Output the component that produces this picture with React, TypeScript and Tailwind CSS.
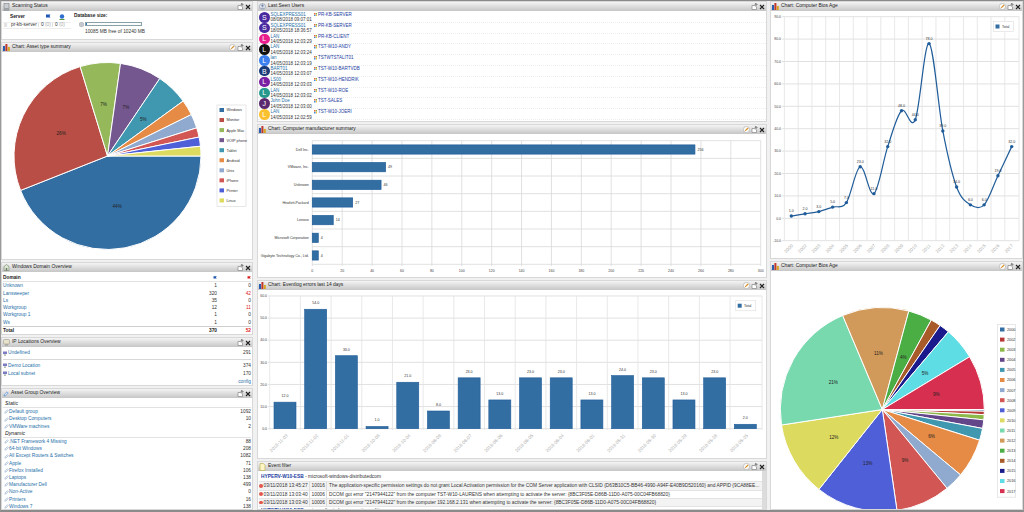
import React from 'react';

const font = { fontFamily: '"Liberation Sans", Arial, sans-serif' };

function BarsIcon() {
  return (
    <svg width="7" height="7" viewBox="0 0 7 7" className="shrink-0">
      <rect x="0" y="2" width="2" height="5" fill="#2a5db0" />
      <rect x="2.4" y="0" width="2" height="7" fill="#c0392b" />
      <rect x="4.8" y="3" width="2" height="4" fill="#d9a520" />
    </svg>
  );
}

function ComputerIcon() {
  return (
    <svg width="7" height="8" viewBox="0 0 7 8" className="shrink-0">
      <rect x="1" y="0.5" width="5" height="5" fill="#c9ccd0" stroke="#7b7f85" strokeWidth="0.6" />
      <rect x="0.5" y="6.3" width="6" height="1.4" fill="#8c9096" />
    </svg>
  );
}

function DomainIcon() {
  return (
    <svg width="7" height="7" viewBox="0 0 7 7" className="shrink-0">
      <path d="M1 6.5V2.5L3.5 0.5 6 2.5v4z" fill="#dfe6d8" stroke="#6d7f62" strokeWidth="0.6" />
      <rect x="2.7" y="4" width="1.6" height="2.5" fill="#6d7f62" />
    </svg>
  );
}

function PinIcon() {
  return (
    <svg width="7" height="7" viewBox="0 0 7 7" className="shrink-0">
      <rect x="0.5" y="0.5" width="6" height="4.5" rx="1" fill="#e7e2c9" stroke="#8b8b80" strokeWidth="0.5" />
      <rect x="2" y="5.5" width="3" height="1" fill="#9a9a90" />
    </svg>
  );
}

function TagIcon({ color = '#8aa7c9', size = 6 }: { color?: string; size?: number }) {
  return (
    <svg width={size} height={size} viewBox="0 0 6 6" className="shrink-0">
      <path d="M1 5 L1.4 3.4 4 0.8 5.2 2 2.6 4.6z" fill="#e9eef3" stroke={color} strokeWidth="0.6" />
    </svg>
  );
}

function UserCircleIcon() {
  return (
    <svg width="7" height="7" viewBox="0 0 7 7" className="shrink-0">
      <circle cx="3.5" cy="3.5" r="3" fill="#dfe5ee" stroke="#8a94a6" strokeWidth="0.6" />
      <circle cx="3.5" cy="2.7" r="1.1" fill="#6c7f9e" />
      <path d="M1.6 5.6c.5-1.2 3.3-1.2 3.8 0" fill="#6c7f9e" />
    </svg>
  );
}

function NoteIcon() {
  return (
    <svg width="7" height="8" viewBox="0 0 7 8" className="shrink-0">
      <path d="M1 0.5h3.4L6 2.2v5.3H1z" fill="#fdf6c4" stroke="#b9a94a" strokeWidth="0.6" />
    </svg>
  );
}

function FlagIcon({ color }: { color: string }) {
  return (
    <svg width="4" height="4" viewBox="0 0 4 4" className="shrink-0">
      <path d="M0.5 4V0.3h3.2L3 1.4l.7 1.1H0.5" fill={color} />
    </svg>
  );
}

function HeaderActions({ edit }: { edit?: boolean }) {
  return (
    <div className="ml-auto flex items-center gap-[1px]">
      {edit && (
        <svg width="7" height="7" viewBox="0 0 7 7">
          <circle cx="3.5" cy="3.5" r="3.1" fill="#fff" stroke="#9a9a9a" strokeWidth="0.5" />
          <path d="M1.8 5.2l.4-1.3L4.6 1.5l1 1-2.5 2.3z" fill="#d9952e" />
        </svg>
      )}
      <svg width="7" height="7" viewBox="0 0 7 7">
        <path d="M1 2.5h2.6M1 2.5v4h4.5V4" fill="#fff" stroke="#777" strokeWidth="0.6" />
        <path d="M5 0.5v3M3.6 1.9 5 0.5l1.4 1.4" fill="none" stroke="#444" strokeWidth="0.7" />
      </svg>
      <svg width="6" height="6" viewBox="0 0 6 6">
        <path d="M1 1l4 4M5 1L1 5" stroke="#222" strokeWidth="1.1" />
      </svg>
    </div>
  );
}

function Panel({
  title,
  icon,
  edit,
  className,
  children,
}: {
  title: string;
  icon: React.ReactNode;
  edit?: boolean;
  className: string;
  children: React.ReactNode;
}) {
  return (
    <section className={`flex flex-col overflow-hidden border border-[#d8d8d8] bg-white ${className}`}>
      <header className="flex h-[9px] shrink-0 items-center gap-[1px] bg-gradient-to-b from-[#f4f4f4] to-[#c6c6c6] pl-[1px] pr-[1px] text-[4.9px] leading-none text-[#222]">
        {icon}
        <span className="ml-[1px]">{title}</span>
        <HeaderActions edit={edit} />
      </header>
      <div className="relative min-h-0 flex-1 overflow-hidden">{children}</div>
    </section>
  );
}

function polar(cx: number, cy: number, r: number, deg: number) {
  const a = (deg * Math.PI) / 180;
  return [cx + r * Math.cos(a), cy + r * Math.sin(a)];
}

function Pie({
  cx,
  cy,
  r,
  slices,
  labelAt = 0.55,
}: {
  cx: number;
  cy: number;
  r: number;
  slices: { deg: number; color: string; label?: string }[];
  labelAt?: number;
}) {
  let start = 0;
  return (
    <g>
      {slices.map((s, i) => {
        const end = start + s.deg;
        const [x1, y1] = polar(cx, cy, r, start);
        const [x2, y2] = polar(cx, cy, r, end);
        const [lx, ly] = polar(cx, cy, r * labelAt, start + s.deg / 2);
        start = end;
        return (
          <g key={i}>
            <path
              d={`M${cx} ${cy}L${x1} ${y1}A${r} ${r} 0 ${s.deg > 180 ? 1 : 0} 1 ${x2} ${y2}Z`}
              fill={s.color}
              stroke="#fff"
              strokeWidth="1"
              strokeLinejoin="round"
            />
            {s.label && (
              <text x={lx} y={ly + 1.5} textAnchor="middle" fontSize="4.6" fill="#222">
                {s.label}
              </text>
            )}
          </g>
        );
      })}
    </g>
  );
}

function PieLegend({
  x,
  y,
  w,
  step,
  items,
}: {
  x: number;
  y: number;
  w: number;
  step: number;
  items: { name: string; color: string }[];
}) {
  return (
    <g>
      <rect x={x} y={y} width={w} height={step * items.length + 1} fill="#fff" stroke="#e2e2e2" strokeWidth="0.8" />
      {items.map((it, i) => (
        <g key={it.name}>
          <rect x={x + 2.5} y={y + 3 + i * step} width="4.5" height="4" fill={it.color} />
          <text x={x + 9.5} y={y + 6.4 + i * step} fontSize="3.8" fill="#333">
            {it.name}
          </text>
        </g>
      ))}
    </g>
  );
}

const assetSlices = [
  { name: 'Windows', deg: 158.4, color: '#336ea3', label: '44%' },
  { name: 'Monitor', deg: 94.6, color: '#b84e45', label: '26%' },
  { name: 'Apple Mac', deg: 25, color: '#95b85a', label: '7%' },
  { name: 'VOIP phone', deg: 26, color: '#75578f', label: '7%' },
  { name: 'Tablet', deg: 20, color: '#3f97b0', label: '5%' },
  { name: 'Android', deg: 9.7, color: '#e58b45' },
  { name: 'Unix', deg: 8.8, color: '#8fa9cf' },
  { name: 'iPhone', deg: 5.8, color: '#d25653' },
  { name: 'Printer', deg: 5.7, color: '#4e5fd8' },
  { name: 'Linux', deg: 6, color: '#ddda60' },
];

function AssetPie() {
  return (
    <svg viewBox="2 52 250 207" className="h-full w-full" style={font}>
      <Pie cx={107.5} cy={156} r={93.5} slices={assetSlices} />
      <PieLegend x={217} y={105} w={29} step={10.05} items={assetSlices} />
    </svg>
  );
}

const biosYears = ['2000', '2002', '2003', '2004', '2005', '2006', '2007', '2008', '2009', '2010', '2011', '2012', '2013', '2014', '2015', '2016', '2017'];
const biosValues = [1, 2, 3, 5, 7, 23, 11, 32, 48, 44, 78, 39, 14, 6, 6, 19, 32];
const biosColors = ['#336ea3', '#b83a38', '#8db84a', '#63458a', '#3f97b0', '#e58b45', '#8fa9cf', '#d25653', '#4e5fd8', '#ddda60', '#78d8ae', '#d29a5a', '#4bae45', '#a85a28', '#1a1a8c', '#5fdde5', '#d62f4f'];

function BiosPie() {
  const slices = biosValues.map((v, i) => {
    const pct = Math.round((v / 370) * 100);
    return { deg: (v / 370) * 360, color: biosColors[i], label: pct >= 4 ? `${pct}%` : undefined };
  });
  return (
    <svg viewBox="771 271 251 238" className="h-full w-full" style={font}>
      <Pie cx={882.3} cy={409.5} r={102} slices={slices} />
      <PieLegend
        x={997.5}
        y={324.5}
        w={18}
        step={10.1}
        items={biosYears.map((name, i) => ({ name, color: biosColors[i] }))}
      />
    </svg>
  );
}

function BiosLine() {
  const x = (i: number) => 791.3 + i * 13.775;
  const y = (v: number) => 218.3 - v * 2.24;
  const pts = biosValues.map((v, i) => [x(i), y(v)]);
  let d = `M${pts[0][0]} ${pts[0][1]}`;
  for (let i = 0; i < pts.length - 1; i++) {
    const p0 = pts[Math.max(i - 1, 0)];
    const p1 = pts[i];
    const p2 = pts[i + 1];
    const p3 = pts[Math.min(i + 2, pts.length - 1)];
    d += `C${p1[0] + (p2[0] - p0[0]) / 6} ${p1[1] + (p2[1] - p0[1]) / 6} ${p2[0] - (p3[0] - p1[0]) / 6} ${p2[1] - (p3[1] - p1[1]) / 6} ${p2[0]} ${p2[1]}`;
  }
  const ticks = [90, 80, 70, 60, 50, 40, 30, 20, 10, 0, -10];
  return (
    <svg viewBox="771 11 251 247" className="h-full w-full" style={font}>
      {ticks.map((t) => (
        <g key={t}>
          <line x1={782} x2={1019} y1={y(t)} y2={y(t)} stroke="#d9d9d9" strokeWidth="0.8" />
          <text x={781} y={y(t) + 1.2} textAnchor="end" fontSize="3.5" fill="#444">
            {t.toFixed(1)}
          </text>
        </g>
      ))}
      {biosYears.map((_, i) => (
        <line key={i} x1={784.4 + i * 13.775} x2={784.4 + i * 13.775} y1={16.7} y2={240.7} stroke="#e2e2e2" strokeWidth="0.8" />
      ))}
      <line x1={1019} x2={1019} y1={16.7} y2={240.7} stroke="#e2e2e2" strokeWidth="0.8" />
      <path d={d} fill="none" stroke="#1f5c99" strokeWidth="1.2" />
      {pts.map((p, i) => (
        <g key={i}>
          <circle cx={p[0]} cy={p[1]} r="1.7" fill="#1f5c99" />
          <text x={p[0]} y={p[1] - 4} textAnchor="middle" fontSize="3.6" fill="#333">
            {biosValues[i].toFixed(1)}
          </text>
          <text
            x={p[0] + 2}
            y={246}
            textAnchor="end"
            fontSize="4.6"
            fill="#b0b0b0"
            transform={`rotate(-45 ${p[0] + 2} 246)`}
          >
            {biosYears[i]}
          </text>
        </g>
      ))}
      <rect x={993.5} y={21.5} width={20} height={10} fill="#fff" stroke="#e2e2e2" strokeWidth="0.7" />
      <rect x={995.5} y={24.5} width={4} height={4} fill="#336ea3" />
      <text x={1002} y={27.8} fontSize="3.5" fill="#333">
        Total
      </text>
    </svg>
  );
}

const makers: [string, number][] = [
  ['Dell Inc.', 256],
  ['VMware, Inc.', 49],
  ['Unknown', 46],
  ['Hewlett-Packard', 27],
  ['Lenovo', 14],
  ['Microsoft Corporation', 4],
  ['Gigabyte Technology Co., Ltd.', 4],
];

function MakerBars() {
  const left = 312.3;
  const top = 140.7;
  const rowH = 17.66;
  const unit = 448.4 / 300;
  const ticks = Array.from({ length: 16 }, (_, i) => i * 20);
  return (
    <svg viewBox="258 134 508 143" className="h-full w-full" style={font}>
      {ticks.map((t) => (
        <g key={t}>
          <line x1={left + t * unit} x2={left + t * unit} y1={top} y2={266} stroke="#d9d9d9" strokeWidth="0.8" />
          <text x={left + t * unit} y={272} textAnchor="middle" fontSize="3.5" fill="#444">
            {t}
          </text>
        </g>
      ))}
      {Array.from({ length: 8 }, (_, i) => (
        <line key={i} x1={left} x2={760.7} y1={top + i * rowH} y2={top + i * rowH} stroke="#d9d9d9" strokeWidth="0.8" />
      ))}
      {makers.map(([name, v], i) => (
        <g key={name}>
          <text x={left - 3.5} y={top + i * rowH + 10} textAnchor="end" fontSize="3.6" fill="#333">
            {name}
          </text>
          <rect x={left} y={top + i * rowH + 4.2} width={v * unit} height={9.2} fill="#336ea3" stroke="#1f5c99" strokeWidth="0.7" />
          <text x={left + v * unit + 2.5} y={top + i * rowH + 10} fontSize="3.6" fill="#333">
            {v}
          </text>
        </g>
      ))}
    </svg>
  );
}

const errors: [string, number][] = [
  ['2018-11-03', 12],
  ['2018-11-02', 54],
  ['2018-11-01', 33],
  ['2018-10-08', 1],
  ['2018-10-04', 21],
  ['2018-06-08', 8],
  ['2018-06-07', 23],
  ['2018-06-06', 13],
  ['2018-06-05', 23],
  ['2018-06-04', 23],
  ['2018-06-01', 13],
  ['2018-05-31', 24],
  ['2018-05-30', 23],
  ['2018-05-29', 13],
  ['2018-05-28', 23],
  ['2018-05-25', 2],
];

function ErrorBars() {
  const y = (v: number) => 428.7 - v * 2.212;
  const x = (i: number) => 285 + i * 30.69;
  return (
    <svg viewBox="258 290 508 168" className="h-full w-full" style={font}>
      {[60, 50, 40, 30, 20, 10, 0].map((t) => (
        <g key={t}>
          <line x1={268} x2={762} y1={y(t)} y2={y(t)} stroke="#d9d9d9" strokeWidth="0.8" />
          <text x={267} y={y(t) + 1.2} textAnchor="end" fontSize="3.5" fill="#444">
            {t.toFixed(1)}
          </text>
        </g>
      ))}
      {errors.map((_, i) => (
        <line key={i} x1={x(i) - 15.3} x2={x(i) - 15.3} y1={296} y2={430} stroke="#e2e2e2" strokeWidth="0.8" />
      ))}
      <line x1={762} x2={762} y1={296} y2={430} stroke="#e2e2e2" strokeWidth="0.8" />
      {errors.map(([date, v], i) => (
        <g key={date}>
          <rect x={x(i) - 11} y={y(v)} width={22} height={v * 2.212} fill="#336ea3" stroke="#1f5c99" strokeWidth="0.6" />
          <text x={x(i)} y={y(v) - 5} textAnchor="middle" fontSize="3.6" fill="#333">
            {v.toFixed(1)}
          </text>
          <text
            x={x(i) + 3}
            y={436}
            textAnchor="end"
            fontSize="4.6"
            fill="#b0b0b0"
            transform={`rotate(-45 ${x(i) + 3} 436)`}
          >
            {date}
          </text>
        </g>
      ))}
      <rect x={735.7} y={300.7} width={20} height={10} fill="#fff" stroke="#e2e2e2" strokeWidth="0.7" />
      <rect x={737.7} y={303.7} width={4} height={4} fill="#336ea3" />
      <text x={744} y={307} fontSize="3.5" fill="#333">
        Total
      </text>
    </svg>
  );
}

function ScanningBody() {
  return (
    <div className="flex pl-[1px] pt-[3px] text-[4.8px] leading-none text-[#222]">
      <div className="w-[68px]">
        <div className="flex h-[6px] items-end">
          <b className="ml-[7px] w-[35px]">Server</b>
          <svg width="6" height="6" viewBox="0 0 6 6">
            <path d="M1 6V0.5h4.5L4.5 2l1 1.5H1" fill="#1d55b5" />
          </svg>
          <svg width="6" height="6" viewBox="0 0 6 6" className="ml-[7.5px]">
            <circle cx="3" cy="2.5" r="2.2" fill="#2f6fd0" />
            <rect x="0.5" y="5" width="5" height="1" fill="#5a9a3c" />
          </svg>
        </div>
        <div className="mt-[1.5px] flex h-[7px] items-center border-y border-[#eeeeee] text-[#333]">
          <span className="w-[6px] pl-[1px] text-[4px] text-[#aaa]">|||</span>
          <span className="w-[29px] pl-[2px]">pr-kb-server</span>
          <span className="w-[14px] border-l border-[#ddd] pl-[2px]">
            0 <span className="text-[#aaa]">(0)</span>
          </span>
          <span className="border-l border-[#ddd] pl-[2px]">
            0 <span className="text-[#aaa]">(0)</span>
          </span>
        </div>
      </div>
      <div className="ml-[3px]">
        <b className="block h-[6px]">Database size:</b>
        <div className="mt-[1.5px] flex items-center gap-[1px]">
          <svg width="5" height="5" viewBox="0 0 5 5" className="ml-[5px]">
            <rect x="0.5" y="0.5" width="4" height="4" rx="1" fill="#c4c9cf" stroke="#858a90" strokeWidth="0.4" />
          </svg>
          <div className="h-[4px] w-[57px] border border-[#8aa0a8] bg-[#fbfdfd]">
            <div className="h-full w-[1px] bg-[#2f78b8]" />
          </div>
        </div>
        <div className="ml-[11px] mt-[3px] text-[#333]">10085 MB free of 10240 MB</div>
      </div>
    </div>
  );
}

const domains: [string, string, string][] = [
  ['Unknown', '1', '0'],
  ['Lansweeper', '320', '42'],
  ['Ls', '35', '0'],
  ['Workgroup', '12', '11'],
  ['Workgroup 1', '1', '0'],
  ['Ws', '1', '0'],
];

function DomainBody() {
  return (
    <div className="px-[1px] pt-[2px] text-[4.8px] leading-[7.3px]">
      <div className="flex items-center border-b border-[#e2e2e2] font-bold text-[#222]">
        <span>Domain</span>
        <span className="ml-auto">
          <FlagIcon color="#1d55b5" />
        </span>
        <span className="flex w-[34px] justify-end">
          <FlagIcon color="#d92020" />
        </span>
      </div>
      {domains.map(([name, count, bad]) => (
        <div key={name} className="flex text-[#333]">
          <a className="text-[#1f6fa8]">{name}</a>
          <span className="ml-auto">{count}</span>
          <span className={`w-[34px] text-right ${bad === '0' ? '' : 'text-[#e02020]'}`}>{bad}</span>
        </div>
      ))}
      <div className="flex border-t border-[#cfcfcf] font-bold text-[#222]">
        <span>Total</span>
        <span className="ml-auto">370</span>
        <span className="w-[34px] text-right text-[#e02020]">52</span>
      </div>
    </div>
  );
}

function IpRow({ name, count }: { name: string; count: string }) {
  return (
    <div className="flex items-center gap-[1px] leading-[8px]">
      <svg width="4" height="5" viewBox="0 0 4 5" className="shrink-0">
        <rect x="0" y="0.5" width="4" height="2.6" fill="#7c7cc4" />
        <rect x="1" y="3.6" width="2" height="1" fill="#8d9a86" />
      </svg>
      <a className="text-[#1f6fa8]">{name}</a>
      <span className="ml-auto text-[#333]">{count}</span>
    </div>
  );
}

function IpBody() {
  return (
    <div className="px-[1px] pt-[2px] text-[4.8px]">
      <IpRow name="Undefined" count="291" />
      <div className="mb-[1.5px] mt-[2px] border-t border-[#d8d8d8]" />
      <IpRow name="Demo Location" count="374" />
      <IpRow name="Local subnet" count="170" />
      <div className="text-right leading-[7px] text-[#1f6fa8]">config</div>
    </div>
  );
}

const staticGroups: [string, string][] = [
  ['Default group', '1092'],
  ['Desktop Computers', '10'],
  ['VMWare machines', '2'],
];
const dynamicGroups: [string, string][] = [
  ['.NET Framework 4 Missing', '88'],
  ['64-bit Windows', '208'],
  ['All Except Routers & Switches', '1082'],
  ['Apple', '71'],
  ['Firefox Installed', '106'],
  ['Laptops', '138'],
  ['Manufacturer Dell', '499'],
  ['Non-Active', '0'],
  ['Printers', '16'],
  ['Windows 7', '138'],
];

function GroupRows({ rows }: { rows: [string, string][] }) {
  return (
    <>
      {rows.map(([name, n]) => (
        <div key={name} className="flex items-center pl-[1px]">
          <TagIcon size={5} />
          <a className="text-[#1f6fa8]">{name}</a>
          <span className="ml-auto text-[#333]">{n}</span>
        </div>
      ))}
    </>
  );
}

function GroupBody() {
  return (
    <div className="pl-[1px] pr-[1px] pt-[2px] text-[4.8px] leading-[7.2px]">
      <div className="border-b border-[#e2e2e2] pl-[2px] text-[5.2px] italic text-[#222]">Static</div>
      <GroupRows rows={staticGroups} />
      <div className="border-b border-[#e2e2e2] pl-[2px] text-[5.2px] italic text-[#222]">Dynamic</div>
      <GroupRows rows={dynamicGroups} />
    </div>
  );
}

const users: [string, string, string, string, string][] = [
  ['S', '#4a2aa0', 'SQLEXPRESS01', '08/08/2018 09:07:01', 'PR-KB-SERVER'],
  ['S', '#4a2aa0', 'SQLEXPRESS01', '18/05/2018 18:36:57', 'PR-KB-SERVER'],
  ['L', '#e91e8c', 'LAN', '14/05/2018 12:03:29', 'PR-KB-CLIENT'],
  ['L', '#111111', 'LAN', '14/05/2018 12:03:24', 'TST-W10-ANDY'],
  ['L', '#3d80ee', 'lan', '14/05/2018 12:03:19', 'TSTWTSTALIT01'],
  ['B', '#1b3a78', 'BART01', '14/05/2018 12:03:07', 'TST-W10-BARTVDB'],
  ['L', '#7b1fa2', 'LS00', '14/05/2018 12:03:03', 'TST-W10-HENDRIK'],
  ['L', '#26998f', 'LAN', '14/05/2018 12:03:02', 'TST-W10-ROE'],
  ['J', '#5b2a6e', 'John Doe', '14/05/2018 12:03:00', 'TST-SALES'],
  ['L', '#fbc02d', 'LAN', '14/05/2018 12:02:59', 'TST-W10-JOERI'],
];

function UsersBody() {
  return (
    <div className="pt-[1px] text-[4.5px] leading-[5.4px]">
      {users.map(([letter, color, name, date, host], i) => (
        <div key={i} className="flex h-[10.8px] border-b border-dotted border-[#eee]">
          <div
            className="ml-[1px] flex h-[10.5px] w-[10.5px] shrink-0 items-center justify-center rounded-full text-[7px] text-white"
            style={{ backgroundColor: color }}
          >
            {letter}
          </div>
          <div className="ml-[1px] w-[43px] shrink-0">
            <div className="text-[#1f6fa8]">{name}</div>
            <div className="whitespace-nowrap text-[#333]">{date}</div>
          </div>
          <div className="flex h-[5.4px] items-center gap-[1px]">
            <svg width="3.5" height="3.5" viewBox="0 0 4 4" className="shrink-0">
              <rect width="1.8" height="1.8" fill="#e5683a" />
              <rect x="2.2" width="1.8" height="1.8" fill="#7cb342" />
              <rect y="2.2" width="1.8" height="1.8" fill="#3d8fe0" />
              <rect x="2.2" y="2.2" width="1.8" height="1.8" fill="#f5c033" />
            </svg>
            <a className="text-[#1b3aa0]">{host}</a>
          </div>
        </div>
      ))}
    </div>
  );
}

const events: [string, string, string][] = [
  [
    '03/11/2018 13:45:27',
    '10016',
    'The application-specific permission settings do not grant Local Activation permission for the COM Server application with CLSID {D63B10C5-BB46-4990-A94F-E40B9D520160} and APPID {9CA88EE...',
  ],
  [
    '03/11/2018 13:03:40',
    '10006',
    'DCOM got error "2147944122" from the computer TST-W10-LAURENS when attempting to activate the server: {8BC3F05E-D86B-11D0-A075-00C04FB68820}',
  ],
  [
    '03/11/2018 13:03:40',
    '10006',
    'DCOM got error "2147944122" from the computer 192.168.2.131 when attempting to activate the server: {8BC3F05E-D86B-11D0-A075-00C04FB68820}',
  ],
];

function EventsBody() {
  return (
    <div className="flex h-full text-[4.85px] leading-[7.3px] text-[#333]">
      <div className="min-w-0 flex-1 overflow-hidden pl-[1px]">
        <div className="py-[1.5px] pl-[2px]">
          <b className="text-[#1b3aa0]">HYPERV-W10-ESB</b> - microsoft-windows-distributedcom
        </div>
        {events.map(([time, id, msg], i) => (
          <div key={i} className={`flex whitespace-nowrap border-t border-[#e4e4e4] ${i === 1 ? 'bg-white' : 'bg-[#f3f3f3]'}`}>
            <span className="flex w-[50px] shrink-0 items-center gap-[1px]">
              <span className="h-[3.5px] w-[3.5px] shrink-0 rounded-full bg-[#e2574c]" />
              {time}
            </span>
            <span className="w-[17px] shrink-0 border-l border-[#ddd] pl-[1.5px]">{id}</span>
            <span className="border-l border-[#ddd] pl-[2px]">{msg}</span>
          </div>
        ))}
        <div className="border-t border-[#e4e4e4] pl-[2px]">
          <b className="text-[#1b3aa0]">HYPERV-W10-ESB</b> - microsoft-windows-security-auditing
        </div>
      </div>
      <div className="w-[4px] shrink-0 bg-[#dcdcdc]" />
    </div>
  );
}

export default function App() {
  return (
    <div
      className="flex h-[512px] w-[1024px] overflow-hidden border-x border-b-2 border-t border-x-[#9a9a9a] border-b-[#8a8a8a] border-t-[#8a8a8a] bg-[#f1f1f1]"
      style={font}
    >
      <div className="flex w-[252px] shrink-0 flex-col gap-[2px]">
        <Panel title="Scanning Status" icon={<ComputerIcon />} className="h-[39px]">
          <ScanningBody />
        </Panel>
        <Panel title="Chart: Asset type summary" icon={<BarsIcon />} edit className="h-[218px]">
          <AssetPie />
        </Panel>
        <Panel title="Windows Domain Overview" icon={<DomainIcon />} className="h-[73px]">
          <DomainBody />
        </Panel>
        <Panel title="IP Locations Overview" icon={<PinIcon />} className="h-[49px]">
          <IpBody />
        </Panel>
        <Panel title="Asset Group Overview" icon={<TagIcon color="#3a7bd5" />} className="min-h-0 flex-1">
          <GroupBody />
        </Panel>
      </div>
      <div className="ml-[4px] flex w-[510px] shrink-0 flex-col gap-[2px]">
        <Panel title="Last Seen Users" icon={<UserCircleIcon />} className="h-[121px]">
          <UsersBody />
        </Panel>
        <Panel title="Chart: Computer manufacturer summary" icon={<BarsIcon />} edit className="h-[154px]">
          <MakerBars />
        </Panel>
        <Panel title="Chart: Eventlog errors last 14 days" icon={<BarsIcon />} edit className="h-[179px]">
          <ErrorBars />
        </Panel>
        <Panel title="Event filter" icon={<NoteIcon />} edit className="min-h-0 flex-1">
          <EventsBody />
        </Panel>
      </div>
      <div className="ml-[3px] flex min-w-0 flex-1 flex-col gap-[2px]">
        <Panel title="Chart: Computer Bios Age" icon={<BarsIcon />} edit className="h-[258px]">
          <BiosLine />
        </Panel>
        <Panel title="Chart: Computer Bios Age" icon={<BarsIcon />} edit className="min-h-0 flex-1">
          <BiosPie />
        </Panel>
      </div>
    </div>
  );
}
